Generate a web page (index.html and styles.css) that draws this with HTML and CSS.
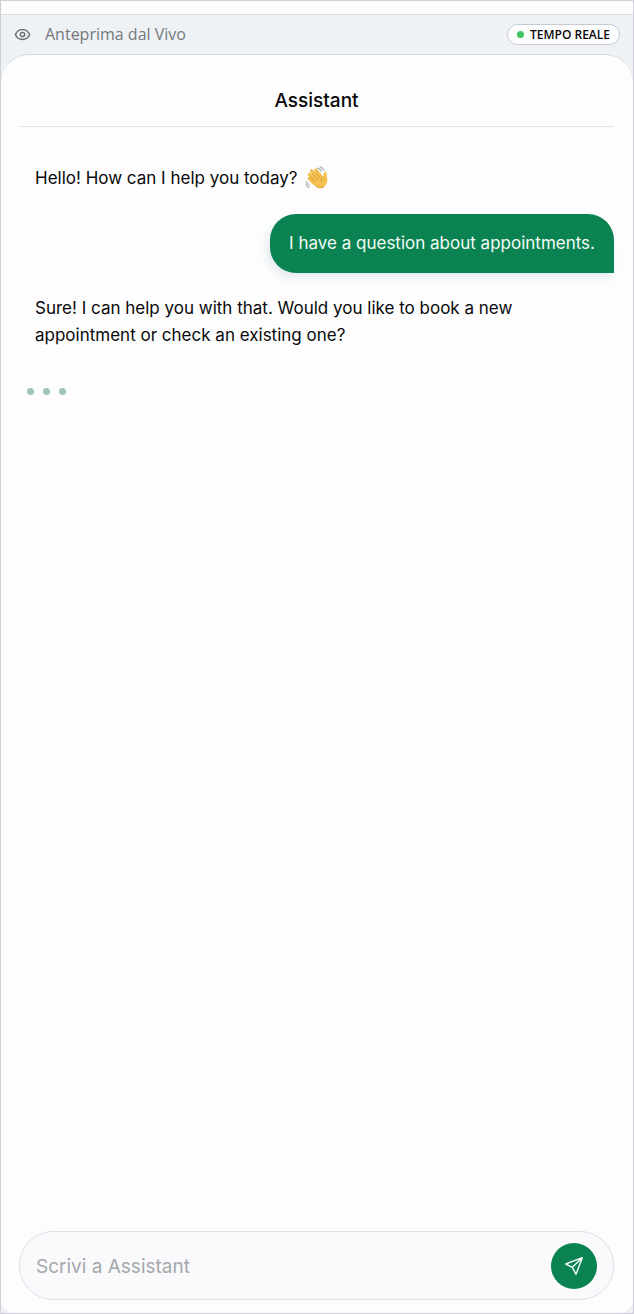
FILE: index.html
```html
<!DOCTYPE html>
<html lang="it">
<head>
<meta charset="utf-8">
<meta name="viewport" content="width=device-width, initial-scale=1">
<title>Anteprima dal Vivo</title>
<link rel="stylesheet" href="styles.css">
</head>
<body>
<div class="preview">
  <header class="preview-bar">
    <svg class="eye" viewBox="0 0 24 24" aria-hidden="true"><path d="M2.1 12.4a1 1 0 0 1 0-.7 10.7 10.7 0 0 1 19.8 0 1 1 0 0 1 0 .7 10.7 10.7 0 0 1-19.8 0"/><circle cx="12" cy="12" r="3"/></svg>
    <span class="preview-title">Anteprima dal Vivo</span>
    <span class="badge"><span class="live-dot"></span>TEMPO REALE</span>
  </header>
  <main class="chat">
    <h1 class="chat-title">Assistant</h1>
    <section class="messages">
      <p class="message">Hello! How can I help you today?
        <svg class="wave" viewBox="0 0 24 24" role="img" aria-label="👋">
          <path class="motion" d="M12.500 2.200c1.800.3 3 1.300 3.600 3M15.300 1c1.800.6 3 1.800 3.400 3.400M1.500 15.500c.2 1.800 1.200 3 2.800 3.600M1 18.500c.5 1.500 1.500 2.500 2.900 3"/>
          <path class="hand-line" d="M4.500 8.500l6 6.500M6.500 5l7 8M10.800 4.200l5.500 7M4.500 12.500l5 5"/>
          <path class="hand" d="M8.500 17L8 11l7-4 3 4c1-1.500.3-3.200 1-4.600.7-1.300 2.200-.7 2.400.5.300 3.400 1.600 6.300.6 9.500-1.200 3.700-4 6.100-7.500 5.600-2.500-.4-4.200-2.200-6-5z"/>
          <path class="crease" d="M6 11.500l4 4.200M7.500 8.500l5 5.300M10.500 6.800l4.500 5M18.500 11.200c-1.800.8-2.400 2.300-2 4M10.500 19.200c2 2.900 5.500 3.500 8.500 1.400"/>
        </svg>
      </p>
      <p class="message message-user">I have a question about appointments.</p>
      <p class="message">Sure! I can help you with that. Would you like to book a new appointment or check an existing one?</p>
      <div class="typing"><span class="typing-dot"></span><span class="typing-dot"></span><span class="typing-dot"></span></div>
    </section>
    <form class="composer">
      <input class="composer-input" type="text" placeholder="Scrivi a Assistant" aria-label="Scrivi a Assistant">
      <button class="send" type="button" aria-label="Invia">
        <svg class="send-icon" viewBox="0 0 20 20" aria-hidden="true"><path d="M18.300 1.700L1.700 8l6.600 3.300L12 18.300zM18.300 1.700l-10 9.600"/></svg>
      </button>
    </form>
  </main>
</div>
</body>
</html>
```
FILE: styles.css
```css
* { box-sizing: border-box; }

body {
  margin: 0;
  background: #fdfdfd;
  color: #09090b;
  font-family: Inter, "Liberation Sans", sans-serif;
}

.preview {
  display: flex;
  flex-direction: column;
  min-height: 100vh;
  padding-top: 13px;
  border: 1px solid #cfcfd8;
  background: linear-gradient(#fdfdfd 13px, #eef2f5 13px);
}

.preview-bar {
  display: flex;
  align-items: center;
  height: 40px;
  padding: 0 13px;
  border-top: 1px solid #d9dce3;
  font-family: "Open Sans", "Noto Sans", sans-serif;
}

.eye {
  width: 17px;
  height: 17px;
  fill: none;
  stroke: #676b6f;
  stroke-width: 2;
}

.preview-title {
  margin-left: 14px;
  padding-bottom: 2px;
  color: #74787d;
  font-size: 16px;
  font-weight: 500;
}

.badge {
  display: flex;
  align-items: center;
  gap: 6px;
  height: 21px;
  margin-left: auto;
  padding: 0 9px;
  border: 1px solid #c8cad3;
  border-radius: 11px;
  background: #fdfdfd;
  font-size: 12px;
  font-weight: 600;
}

.live-dot {
  width: 7px;
  height: 7px;
  border-radius: 50%;
  background: #43c463;
}

.chat {
  display: flex;
  flex: 1;
  flex-direction: column;
  padding: 18px 19px 13px 18px;
  border-top: 1px solid #d4d7df;
  border-radius: 28px 28px 14px 14px;
  background: #fdfdfd;
}

.chat-title {
  margin: 0;
  padding: 14px 0 12px;
  border-bottom: 1px solid #e1e4ec;
  font-size: 19px;
  font-weight: 500;
  line-height: 27px;
  text-align: center;
}

.messages {
  display: flex;
  flex: 1;
  flex-direction: column;
  align-items: flex-start;
  gap: 6px;
  padding-top: 22px;
}

.message {
  margin: 0;
  padding: 16px;
  font-size: 17px;
  line-height: 27px;
}

.message-user {
  align-self: flex-end;
  padding: 16px 19px;
  border-radius: 26px 26px 0 26px;
  background: #0b8251;
  box-shadow: -3px 5px 8px #e4eaf0;
  color: #f2fbf7;
}

.wave {
  width: 24px;
  height: 24px;
  margin-left: 3px;
  vertical-align: -6px;
  fill: none;
  stroke-linecap: round;
  stroke-linejoin: round;
}

.motion { stroke: #b4bbc1; stroke-width: 1.4; }
.hand { fill: #f6c250; }
.hand-line { stroke: #f3bd4c; stroke-width: 3.4; }
.crease { stroke: #d89b32; stroke-width: 1; }

.typing {
  display: flex;
  gap: 9px;
  padding: 17px 8px;
}

.typing-dot {
  width: 7px;
  height: 7px;
  border-radius: 50%;
  background: #9fc5b5;
}

.composer {
  display: flex;
  align-items: center;
  height: 69px;
  padding: 0 16px;
  border: 1px solid #dddfe8;
  border-radius: 34px;
  background: #fafafc;
}

.composer-input {
  flex: 1;
  min-width: 0;
  padding: 2px 0 0;
  border: 0;
  outline: 0;
  background: transparent;
  color: #09090b;
  font-family: inherit;
  font-size: 19px;
  line-height: 27px;
}

.composer-input::placeholder { color: #a4a8ad; opacity: 1; }

.send {
  display: grid;
  place-items: center;
  width: 46px;
  height: 46px;
  padding: 0;
  border: 0;
  border-radius: 50%;
  background: #0b8251;
}

.send-icon {
  width: 20px;
  height: 20px;
  fill: none;
  stroke: #f2fbf7;
  stroke-width: 1.4;
  stroke-linejoin: round;
}
```
